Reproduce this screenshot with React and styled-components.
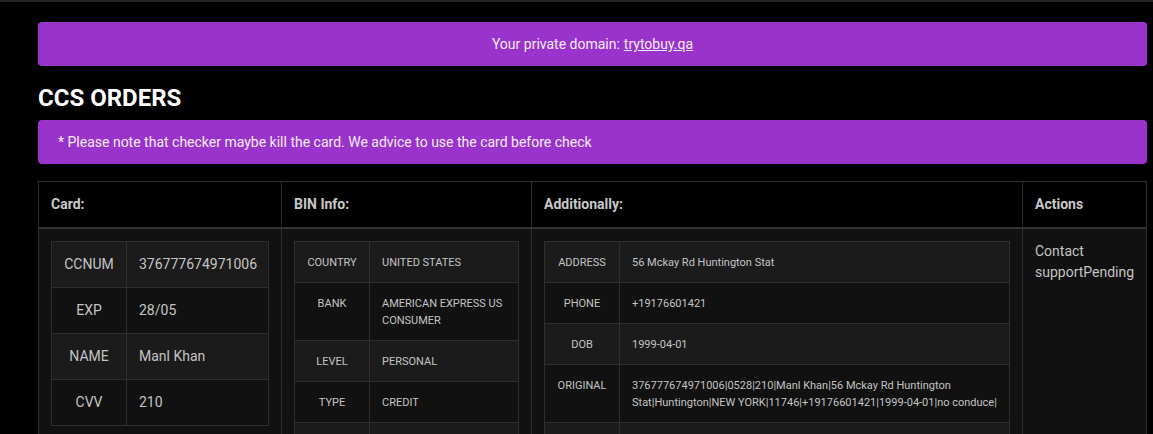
import React from 'react';
import styled, { createGlobalStyle } from 'styled-components';

const GlobalStyle = createGlobalStyle`
  html, body {
    margin: 0;
    padding: 0;
    background: #000;
  }
  body {
    border-top: 2px solid #262626;
    font-family: Roboto, "Liberation Sans", sans-serif;
    color: #ccc;
  }
`

const Page = styled.div`
  padding: 20px 6px 0 38px;
  min-height: 432px;
  box-sizing: border-box;
`

const Banner = styled.div`
  background-color: #9933cc;
  color: #f4ecf8;
  border-radius: 4px;
  height: 44px;
  display: flex;
  align-items: center;
  justify-content: ${(p) => (p.$center ? 'center' : 'flex-start')};
  padding: 0 20px;
  font-size: 14px;
  a {
    color: #f4ecf8;
    text-decoration: underline;
    margin-left: 4px;
  }
`

const Title = styled.h1`
  margin: 18px 0 8px;
  font-size: 24px;
  line-height: 28px;
  font-weight: 700;
  color: #fff;
`

const Orders = styled.table`
  width: 100%;
  margin-top: 17px;
  border-collapse: collapse;
  table-layout: fixed;
  th {
    background: #000;
    color: #c8c8c8;
    font-size: 14px;
    font-weight: 700;
    text-align: left;
    padding: 12px 12px 13px;
    line-height: 20px;
    border: 1px solid #2e2e2e;
    border-bottom: 2px solid #333;
  }
  > tbody > tr > td {
    background: #111;
    vertical-align: top;
    padding: 12px 12px;
    border: 1px solid #2e2e2e;
  }
`

const Info = styled.table`
  width: 100%;
  border-collapse: collapse;
  table-layout: fixed;
  font-size: ${(p) => p.$size}px;
  line-height: ${(p) => p.$line}px;
  color: #c4c4c4;
  tr:nth-child(odd) td {
    background: #1b1b1b;
  }
  tr:nth-child(even) td {
    background: #111;
  }
  td {
    border: 1px solid #2e2e2e;
    padding: 12px 12px ${(p) => p.$bottom}px;
    vertical-align: top;
  }
  td:first-child {
    text-align: center;
  }
`

const LabelCol = styled.col`
  width: 75px;
`

const Actions = styled.div`
  font-size: 14px;
  line-height: 21px;
  color: #c4c4c4;
`

function InfoTable({ rows, size, line, bottom }) {
  return (
    <Info $size={size} $line={line} $bottom={bottom}>
      <colgroup>
        <LabelCol />
        <col />
      </colgroup>
      <tbody>
        {rows.map(([k, v]) => (
          <tr key={k}>
            <td>{k}</td>
            <td>{v}</td>
          </tr>
        ))}
      </tbody>
    </Info>
  );
}

const card = [
  ['CCNUM', '376777674971006'],
  ['EXP', '28/05'],
  ['NAME', 'Manl Khan'],
  ['CVV', '210'],
];

const bin = [
  ['COUNTRY', 'UNITED STATES'],
  ['BANK', 'AMERICAN EXPRESS US CONSUMER'],
  ['LEVEL', 'PERSONAL'],
  ['TYPE', 'CREDIT'],
  ['BRAND', 'AMEX'],
];

const extra = [
  ['ADDRESS', '56 Mckay Rd Huntington Stat'],
  ['PHONE', '+19176601421'],
  ['DOB', '1999-04-01'],
  ['ORIGINAL', '376777674971006|0528|210|Manl Khan|56 Mckay Rd Huntington Stat|Huntington|NEW YORK|11746|+19176601421|1999-04-01|no conduce|'],
  ['EMAIL', '-'],
];

export default function App() {
  return (
    <>
      <GlobalStyle />
      <Page>
        <Banner $center>
          Your private domain: <a href="#">trytobuy.qa</a>
        </Banner>
        <Title>CCS ORDERS</Title>
        <Banner>* Please note that checker maybe kill the card. We advice to use the card before check</Banner>
        <Orders>
          <colgroup>
            <col style={{ width: '243px' }} />
            <col style={{ width: '250px' }} />
            <col />
            <col style={{ width: '124px' }} />
          </colgroup>
          <thead>
            <tr>
              <th>Card:</th>
              <th>BIN Info:</th>
              <th>Additionally:</th>
              <th>Actions</th>
            </tr>
          </thead>
          <tbody>
            <tr>
              <td><InfoTable rows={card} size={14} line={21} bottom={12} /></td>
              <td><InfoTable rows={bin} size={11} line={17} bottom={11} /></td>
              <td><InfoTable rows={extra} size={11} line={17} bottom={11} /></td>
              <td><Actions>Contact supportPending</Actions></td>
            </tr>
          </tbody>
        </Orders>
      </Page>
    </>
  );
}
